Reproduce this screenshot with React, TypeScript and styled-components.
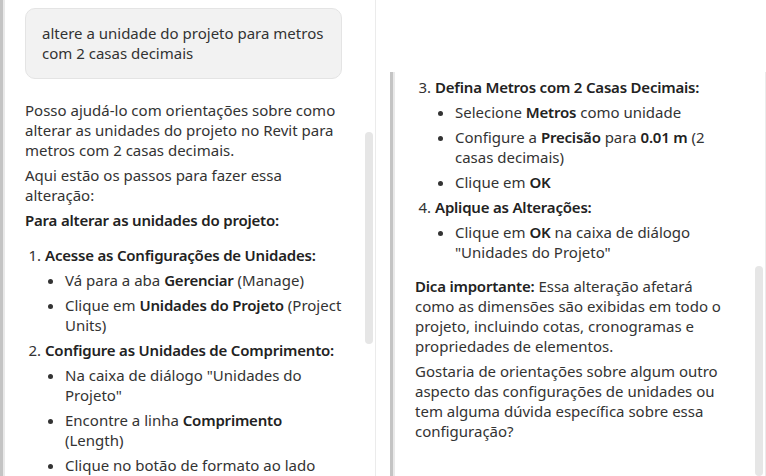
import React from "react";
import styled, { createGlobalStyle } from "styled-components";

const GlobalStyle = createGlobalStyle`
  html, body {
    margin: 0;
    padding: 0;
    background: #ffffff;
  }
  body {
    font-family: "Noto Sans", "DejaVu Sans", sans-serif;
    font-size: 15px;
    line-height: 20px;
    color: #333333;
  }
`;

const Page = styled.div`
  display: flex;
  height: 476px;
  overflow: hidden;
  background: #ffffff;
`;

const Panel = styled.div<{ $top: number; $left: number }>`
  display: flex;
  width: 376px;
  box-sizing: border-box;
  margin-top: ${(p) => p.$top}px;
  margin-left: ${(p) => p.$left}px;
  height: ${(p) => 476 - p.$top}px;
  border-left: 3px solid #c4c4c4;
  border-right: 1px solid #ebebeb;
  box-shadow: inset 2px 0 0 #e9e9e9;
  overflow: hidden;
  flex-shrink: 0;
`;

const Scroll = styled.div<{ $pad: number }>`
  width: 319px;
  padding: ${(p) => p.$pad}px 21px 0 20px;
  margin-left: 2px;
  flex-shrink: 0;
`;

const Track = styled.div`
  width: 8px;
  margin-right: 2px;
  display: flex;
  flex-direction: column;
`;

const Thumb = styled.div<{ $top: number; $height: number }>`
  margin-top: ${(p) => p.$top}px;
  height: ${(p) => p.$height}px;
  background: #e6e6e6;
  border-radius: 4px;
`;

const Bubble = styled.div`
  background: #f2f2f2;
  border: 1px solid #e4e4e4;
  border-radius: 10px;
  padding: 14px 16px 15px;
  margin: 0 2px 21px 0;
  color: #333333;
`;

const Para = styled.p`
  margin: 0 0 5px;
`;

const Heading = styled.p`
  margin: 0;
  font-weight: 600;
  letter-spacing: -0.2px;
  color: #222222;
`;

const Steps = styled.ol<{ $gap: number }>`
  margin: ${(p) => p.$gap}px 0 14px;
  padding-left: 20px;
`;

const Step = styled.li`
  margin-top: 5px;
`;

const Bullets = styled.ul`
  margin: 0;
  padding-left: 20px;
  list-style: disc;
`;

const B = styled.strong`
  font-weight: 600;
  letter-spacing: -0.2px;
  color: #222222;
`;

type ThumbSpec = { top: number; height: number };

type PanelProps = {
  top: number;
  left: number;
  pad: number;
  thumb: ThumbSpec;
  children: React.ReactNode;
};

const ChatPanel = ({ top, left, pad, thumb, children }: PanelProps) => (
  <Panel $top={top} $left={left}>
    <Scroll $pad={pad}>{children}</Scroll>
    <Track>
      <Thumb $top={thumb.top} $height={thumb.height} />
    </Track>
  </Panel>
);

const App = () => {
  return (
    <>
      <GlobalStyle />
      <Page>
        <ChatPanel top={0} left={0} pad={8} thumb={{ top: 132, height: 212 }}>
          <Bubble>altere a unidade do projeto para metros com 2 casas decimais</Bubble>
          <Para>
            Posso ajudá-lo com orientações sobre como alterar as unidades do
            projeto no Revit para metros com 2 casas decimais.
          </Para>
          <Para>Aqui estão os passos para fazer essa alteração:</Para>
          <Heading>Para alterar as unidades do projeto:</Heading>
          <Steps $gap={15}>
            <Step>
              <B>Acesse as Configurações de Unidades:</B>
              <Bullets>
                <Step>
                  Vá para a aba <B>Gerenciar</B> (Manage)
                </Step>
                <Step>
                  Clique em <B>Unidades do Projeto</B> (Project Units)
                </Step>
              </Bullets>
            </Step>
            <Step>
              <B>Configure as Unidades de Comprimento:</B>
              <Bullets>
                <Step>Na caixa de diálogo "Unidades do Projeto"</Step>
                <Step>
                  Encontre a linha <B>Comprimento</B> (Length)
                </Step>
                <Step>Clique no botão de formato ao lado</Step>
              </Bullets>
            </Step>
          </Steps>
        </ChatPanel>

        <ChatPanel top={72} left={14} pad={0} thumb={{ top: 194, height: 260 }}>
          <Steps $gap={0} start={3}>
            <Step>
              <B>Defina Metros com 2 Casas Decimais:</B>
              <Bullets>
                <Step>
                  Selecione <B>Metros</B> como unidade
                </Step>
                <Step>
                  Configure a <B>Precisão</B> para <B>0.01 m</B> (2 casas
                  decimais)
                </Step>
                <Step>
                  Clique em <B>OK</B>
                </Step>
              </Bullets>
            </Step>
            <Step>
              <B>Aplique as Alterações:</B>
              <Bullets>
                <Step>
                  Clique em <B>OK</B> na caixa de diálogo "Unidades do Projeto"
                </Step>
              </Bullets>
            </Step>
          </Steps>
          <Para>
            <B>Dica importante:</B> Essa alteração afetará como as dimensões
            são exibidas em todo o projeto, incluindo cotas, cronogramas e
            propriedades de elementos.
          </Para>
          <Para>
            Gostaria de orientações sobre algum outro aspecto das
            configurações de unidades ou tem alguma dúvida específica sobre
            essa configuração?
          </Para>
        </ChatPanel>
      </Page>
    </>
  );
};

export default App;
